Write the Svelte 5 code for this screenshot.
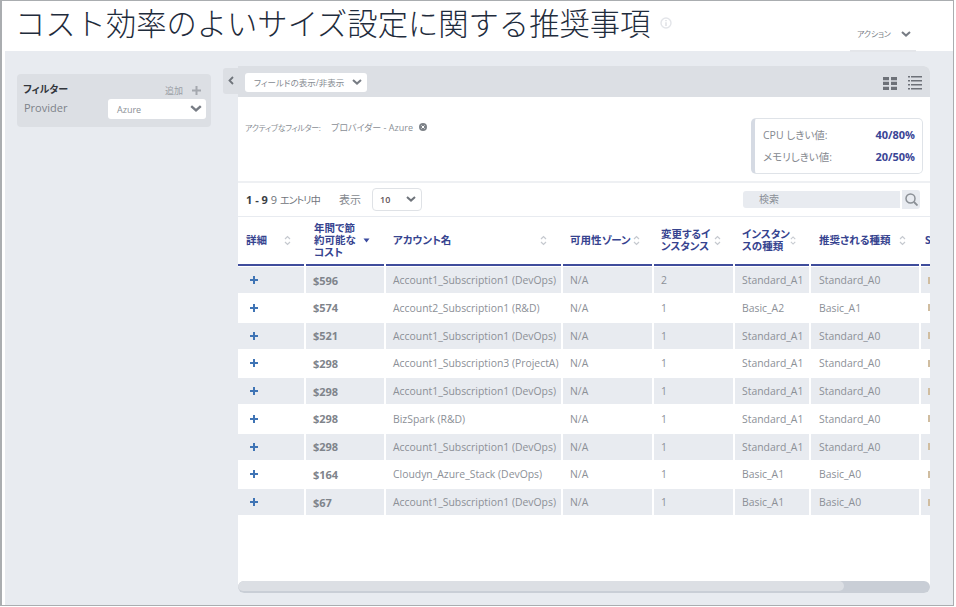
<script>
  const cols = [
    { lines: ['詳細'], cls: 'c-detail' },
    { lines: ['年間で節', '約可能な', 'コスト'], cls: 'c-cost', active: true },
    { lines: ['アカウント名'], cls: 'c-acc' },
    { lines: ['可用性ゾーン'], cls: 'c-zone' },
    { lines: ['変更するイ', 'ンスタンス'], cls: 'c-chg' },
    { lines: ['インスタン', 'スの種類'], cls: 'c-type' },
    { lines: ['推奨される種類'], cls: 'c-rec' }
  ];
  const rows = [
    ['$596', 'Account1_Subscription1 (DevOps)', 'N/A', '2', 'Standard_A1', 'Standard_A0'],
    ['$574', 'Account2_Subscription1 (R&D)', 'N/A', '1', 'Basic_A2', 'Basic_A1'],
    ['$521', 'Account1_Subscription1 (DevOps)', 'N/A', '1', 'Standard_A1', 'Standard_A0'],
    ['$298', 'Account1_Subscription3 (ProjectA)', 'N/A', '1', 'Standard_A1', 'Standard_A0'],
    ['$298', 'Account1_Subscription1 (DevOps)', 'N/A', '1', 'Standard_A1', 'Standard_A0'],
    ['$298', 'BizSpark (R&D)', 'N/A', '1', 'Standard_A1', 'Standard_A0'],
    ['$298', 'Account1_Subscription1 (DevOps)', 'N/A', '1', 'Standard_A1', 'Standard_A0'],
    ['$164', 'Cloudyn_Azure_Stack (DevOps)', 'N/A', '1', 'Basic_A1', 'Basic_A0'],
    ['$67', 'Account1_Subscription1 (DevOps)', 'N/A', '1', 'Basic_A1', 'Basic_A0']
  ];
</script>

{#snippet chev(w, color)}
  <svg class="chev" width={w} height={w * 0.6} viewBox="0 0 10 6"><path d="M1 1l4 3.6L9 1" fill="none" stroke={color} stroke-width="2" /></svg>
{/snippet}

{#snippet sort()}
  <svg class="sort" width="7" height="11" viewBox="0 0 7 11"><path d="M1 4l2.5-2.5L6 4M1 7l2.5 2.5L6 7" fill="none" stroke="#c5c9cf" stroke-width="1.2" /></svg>
{/snippet}

<div class="frame">
  <header class="top">
    <h1>コスト効率のよいサイズ設定に関する推奨事項</h1>
    <svg class="info" width="12" height="12" viewBox="0 0 12 12"><circle cx="6" cy="6" r="5" fill="none" stroke="#e3e5e9" stroke-width="1.4" /><path d="M6 3v1.2M6 5.3V9" stroke="#dfe1e5" stroke-width="1.5" /></svg>
    <div class="action"><span>アクション</span>{@render chev(10, '#777c84')}</div>
  </header>

  <main class="main">
    <aside class="side">
      <section class="filter">
        <div class="f-head"><strong>フィルター</strong><span class="add">追加<svg width="9" height="9" viewBox="0 0 9 9"><path d="M4.5 0v9M0 4.5h9" stroke="#a4a8ae" stroke-width="2" /></svg></span></div>
        <div class="f-row"><span class="f-label">Provider</span><div class="f-sel"><span>Azure</span>{@render chev(12, '#777c84')}</div></div>
      </section>
    </aside>

    <section class="panel">
      <div class="tab"><svg width="6" height="9" viewBox="0 0 6 9"><path d="M5 1L1.5 4.5 5 8" fill="none" stroke="#6f747b" stroke-width="1.8" /></svg></div>
      <div class="toolbar">
        <div class="fields"><span>フィールドの表示/非表示</span>{@render chev(10, '#777c84')}</div>
        <div class="views">
          <svg width="14" height="13" viewBox="0 0 14 13"><path fill="#6d7178" d="M0 0h6v3.300H0zM8 0h6v3.300H8zM0 4.800h6v3.300H0zM8 4.800h6v3.300H8zM0 9.700h6v3.300H0zM8 9.700h6v3.300H8z" /></svg>
          <svg width="14" height="14" viewBox="0 0 14 14"><path fill="#6d7178" d="M0 0h2v1.500H0zM3 0h11v1.500H3zM0 4h2v1.500H0zM3 4h11v1.500H3zM0 8h2v1.500H0zM3 8h11v1.500H3zM0 12h2v1.500H0zM3 12h11v1.500H3z" /></svg>
        </div>
      </div>

      <div class="summary">
        <div class="active-f">
          <span class="af-label">アクティブなフィルター:</span>
          <span class="af-val">プロバイダー - Azure</span>
          <svg width="8" height="8" viewBox="0 0 8 8"><circle cx="4" cy="4" r="4" fill="#7d8288" /><path d="M2.500 2.500l3 3M5.500 2.500l-3 3" stroke="#fff" stroke-width="1" /></svg>
        </div>
        <div class="thresholds">
          <div class="t-row"><span>CPU しきい値:</span><b>40/80%</b></div>
          <div class="t-row"><span>メモリしきい値:</span><b>20/50%</b></div>
        </div>
      </div>

      <div class="pager">
        <span class="count"><b>1 - 9</b> 9 <span class="of">エントリ中</span></span>
        <span class="show">表示</span>
        <div class="size"><span>10</span>{@render chev(10, '#6f747b')}</div>
        <div class="search">
          <div class="s-input">検索</div>
          <div class="s-btn"><svg width="13" height="13" viewBox="0 0 13 13"><circle cx="5.500" cy="5.500" r="4.500" fill="none" stroke="#8b9096" stroke-width="1.500" /><path d="M9 9l3.500 3.500" stroke="#8b9096" stroke-width="1.800" /></svg></div>
        </div>
      </div>

      <div class="table">
        <div class="thead grid">
          {#each cols as c}
            <div class="th {c.cls}">
              <span class="th-label">{#each c.lines as l}<span class="ln">{l}</span>{/each}</span>
              {#if c.active}
                <svg class="sort" width="7" height="5" viewBox="0 0 7 5"><path d="M0.500 0.500h6L3.500 4.500z" fill="#3a4a9f" /></svg>
              {:else}
                {@render sort()}
              {/if}
            </div>
          {/each}
          <div class="th c-s"><span class="th-label">S</span></div>
        </div>
        {#each rows as r, i}
          <div class="tr grid" class:odd={i % 2 === 0}>
            <div class="td plus"><svg width="8" height="8" viewBox="0 0 8 8"><path d="M4 0v8M0 4h8" stroke="#3f74b5" stroke-width="2" /></svg></div>
            <div class="td cost">{r[0]}</div>
            <div class="td acc">{r[1]}</div>
            <div class="td">{r[2]}</div>
            <div class="td">{r[3]}</div>
            <div class="td">{r[4]}</div>
            <div class="td rec">{r[5]}</div>
            <div class="td last"><i></i></div>
          </div>
        {/each}
      </div>

      <div class="scroll"><div class="thumb"></div></div>
    </section>
  </main>
</div>

<style>
  :global(body) {
    margin: 0;
    background: #fff;
    font-family: "Open Sans", "Noto Sans CJK JP", sans-serif;
    font-feature-settings: "palt";
  }
  .frame {
    box-sizing: border-box;
    width: 954px;
    height: 606px;
    border: 1px solid #aaadb0;
    border-left-width: 2px;
    display: flex;
    flex-direction: column;
    background: #fff;
    overflow: hidden;
  }
  .top {
    height: 50px;
    flex: none;
    display: flex;
    align-items: flex-start;
    padding-left: 13px;
    position: relative;
  }
  h1 {
    margin: 0;
    font-size: 30.300px;
    line-height: 43px;
    font-weight: 300;
    font-feature-settings: normal;
    color: #1f2c3c;
    font-family: "Noto Sans CJK JP", sans-serif;
    white-space: nowrap;
  }
  .info { margin: 16px 0 0 10px; }
  .action {
    position: absolute;
    left: 848px;
    top: 0;
    width: 66px;
    height: 51px;
    box-sizing: border-box;
    border-bottom: 2px solid #e4e6ea;
    display: flex;
    align-items: center;
    padding: 16px 0 0 7px;
    font-size: 8px;
    color: #7d8289;
    white-space: nowrap;
  }
  .action span { width: 44px; flex: none; letter-spacing: -0.2px; }
  .action .chev { flex: none; }
  .main {
    flex: 1;
    margin-left: 3px;
    background: #e8ebf0;
    display: flex;
    min-height: 0;
  }
  .side { width: 233px; flex: none; padding: 23px 0 0 12px; box-sizing: border-box; }
  .filter {
    width: 194px;
    height: 53px;
    background: #dcdfe4;
    border-radius: 4px;
    padding: 6px 5px 0 6px;
    box-sizing: border-box;
  }
  .f-head { display: flex; justify-content: space-between; align-items: center; height: 17px; }
  .f-head strong { font-size: 10px; font-weight: 700; color: #32363c; }
  .add { font-size: 9px; color: #9a9ea5; display: flex; align-items: center; gap: 9px; margin-top: 3px; }
  .add svg { margin-right: 5px; }
  .f-row { display: flex; align-items: center; justify-content: space-between; margin-top: 2px; }
  .f-label { font-size: 11px; color: #7d8289; margin-top: -4px; margin-left: 1px; }
  .f-sel {
    width: 98px;
    height: 20px;
    background: #fff;
    border-radius: 3px;
    display: flex;
    align-items: center;
    justify-content: space-between;
    padding: 0 4px 0 9px;
    box-sizing: border-box;
    font-size: 9px;
    color: #8a8f96;
  }
  .panel {
    width: 692px;
    margin-top: 15px;
    margin-bottom: 12px;
    background: #fff;
    position: relative;
    display: flex;
    flex-direction: column;
    flex: none;
    border-radius: 6px 6px 6px 6px;
  }
  .tab {
    position: absolute;
    right: 100%;
    top: 2px;
    width: 15px;
    height: 26px;
    background: #dcdfe4;
    border-radius: 3px 0 0 3px;
    display: flex;
    justify-content: center;
    padding-top: 8px;
    box-sizing: border-box;
  }
  .toolbar {
    height: 31px;
    flex: none;
    background: #dcdfe4;
    border-radius: 0 6px 0 0;
    display: flex;
    justify-content: space-between;
    align-items: center;
    padding: 0 8px 0 7px;
  }
  .fields {
    width: 122px;
    height: 19px;
    background: #fff;
    border-radius: 3px;
    display: flex;
    align-items: center;
    justify-content: space-between;
    padding: 0 5px 0 9px;
    box-sizing: border-box;
    font-size: 8.500px;
    color: #868b92;
    margin-top: 1px;
    white-space: nowrap;
  }
  .views { display: flex; gap: 11px; align-items: center; margin-top: 3px; }
  .summary {
    height: 86px;
    flex: none;
    box-sizing: border-box;
    border-bottom: 2px solid #eef0f3;
    display: flex;
    justify-content: space-between;
    padding: 21px 7px 0 7px;
  }
  .active-f { display: flex; align-items: center; height: 18px; font-size: 9px; color: #8a8f96; gap: 6px; }
  .af-label { font-size: 8px; letter-spacing: -0.3px; width: 80px; flex: none; white-space: nowrap; }
  .af-val { white-space: nowrap; }
  .thresholds {
    width: 172px;
    height: 56px;
    box-sizing: border-box;
    border: 1px solid #dfe3e8;
    border-left: 4px solid #d5dae3;
    border-radius: 5px;
    padding: 4px 7px 0 8px;
    font-size: 10.500px;
    color: #85898f;
  }
  .t-row { display: flex; justify-content: space-between; align-items: center; height: 22.500px; }
  .t-row b { color: #3a4596; font-weight: 700; font-size: 11px; }
  .pager {
    height: 33px;
    flex: none;
    display: flex;
    align-items: center;
    padding: 0 0 1px 8px;
    box-sizing: border-box;
    font-size: 11px;
    color: #6b7077;
  }
  .count { width: 93px; color: #70757c; white-space: nowrap; }
  .count b { color: #3a3e44; font-weight: 700; }
  .of { font-size: 10px; letter-spacing: -0.9px; }
  .show { width: 33px; color: #85898f; }
  .size {
    width: 50px;
    height: 23px;
    box-sizing: border-box;
    border: 1px solid #dfe2e6;
    border-radius: 4px;
    display: flex;
    align-items: center;
    justify-content: space-between;
    padding: 0 5px 0 7px;
    font-size: 9px;
    font-weight: 600;
    color: #5f5257;
  }
  .search { margin-left: auto; margin-right: 10px; display: flex; gap: 2px; align-items: center; }
  .s-input {
    width: 157px;
    height: 17px;
    background: #e8ebf0;
    border-radius: 3px 0 0 3px;
    box-sizing: border-box;
    padding-left: 16px;
    font-size: 10px;
    line-height: 17px;
    color: #8a8f96;
  }
  .s-btn {
    width: 18px;
    height: 19px;
    background: #e8ebf0;
    border-radius: 0 3px 3px 0;
    display: flex;
    align-items: center;
    justify-content: center;
  }
  .table {
    flex: 1;
    overflow: hidden;
    min-height: 0;
    border-top: 1px solid #e8ebf0;
  }
  .grid {
    display: grid;
    grid-template-columns: 66px 78px 175px 89px 79px 74px 108px 40px;
    column-gap: 2px;
  }
  .thead { height: 50px; }
  .th {
    border-bottom: 2px solid #3f4d9c;
    height: 49px;
    box-sizing: border-box;
    display: flex;
    align-items: center;
    justify-content: space-between;
    padding: 0 13px 1px 8px;
    font-size: 10.500px;
    font-weight: 700;
    line-height: 12.300px;
    color: #36438f;
    white-space: nowrap;
  }
  .th-label { display: block; }
  .ln { display: block; }
  .c-cost { padding: 0 14px 1px 8px; }
  .c-acc { padding: 0 14px 1px 7px; }
  .c-zone { padding: 0 12px 1px 7px; }
  .c-chg { padding: 0 12px 1px 7px; }
  .c-type { padding: 0 13px 1px 7px; }
  .c-rec { padding: 0 13px 1px 8px; }
  .c-s { padding-left: 4px; }
  .tr { height: 27.750px; align-items: start; }
  .td {
    height: 26px;
    display: flex;
    align-items: center;
    padding-left: 7px;
    font-size: 10.400px;
    color: #8c9097;
    white-space: nowrap;
    overflow: hidden;
  }
  .tr.odd .td { background: #e8ebf0; }
  .plus { padding-left: 12px; }
  .cost { font-weight: 700; font-size: 11px; color: #7f848b; }
  .rec { padding-left: 8px; }
  .td.last { padding-left: 7px; }
  .last i { width: 3px; height: 7px; background: #d0bda0; display: block; }
  .scroll {
    height: 12px;
    flex: none;
    background: #c9ced6;
    border-radius: 6px;
    overflow: hidden;
  }
  .thumb {
    width: 606px;
    height: 10px;
    background: #dcdfe4;
    border-radius: 5px;
  }
</style>
